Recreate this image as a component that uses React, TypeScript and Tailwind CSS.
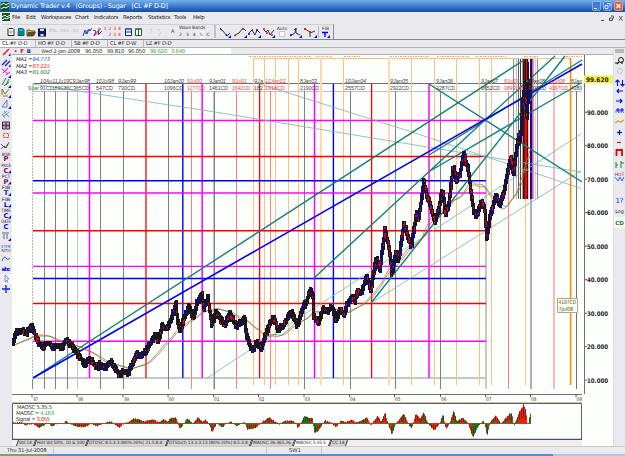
import type { ReactNode } from 'react';
import clsx from 'clsx';

type Pt = [number, number];

const menus = [
  { name: 'File', w: 'w-[14px]' },
  { name: 'Edit', w: 'w-[15px]' },
  { name: 'Workspaces', w: 'w-[34px]' },
  { name: 'Chart', w: 'w-[19px]' },
  { name: 'Indicators', w: 'w-[29px]' },
  { name: 'Reports', w: 'w-[25px]' },
  { name: 'Statistics', w: 'w-[26px]' },
  { name: 'Tools', w: 'w-[19px]' },
  { name: 'Help', w: 'w-[14px]' },
];

const tabs = [
  { name: 'CL #F D-D', w: 'w-[35px]' },
  { name: 'HO #F D-D', w: 'w-[36px]' },
  { name: 'SB #F D-D', w: 'w-[36px]' },
  { name: 'CL #F D-W', w: 'w-[36px]' },
  { name: 'LZ #F D-D', w: 'w-[36px]' },
];

const price: Pt[] = [
  [12, 345], [17, 332], [21.7, 329], [26, 334], [32.5, 326], [36, 337], [40, 344], [44, 347], [48.5, 342], [52.5, 348],
  [58, 346], [63, 347], [66, 340], [71, 345], [77, 353], [81.5, 359], [86, 366], [88.5, 359], [93, 362], [97.5, 369],
  [100, 364], [105, 368], [110.5, 361], [115, 368], [119.5, 375], [124, 371], [128, 374], [133, 362], [137, 353], [141.5, 356],
  [146.5, 350], [151.5, 342], [155, 334], [158.5, 340], [162.5, 326], [167.5, 328], [172.5, 315], [176, 304], [177.5, 319], [180.5, 331],
  [184.5, 317], [189, 307], [193.5, 318], [197, 303], [202, 295], [204, 308], [208, 298], [212, 324], [216.5, 311], [221, 320],
  [225, 324], [230, 314], [236.5, 326], [243, 320], [245, 319], [246.5, 336], [252.5, 350], [257, 343], [261.5, 348], [266.5, 333],
  [270, 323], [274, 318], [278, 330], [285, 323], [291.5, 312], [297.5, 326], [303, 308], [307, 301], [310.5, 288], [313, 297],
  [313.8, 315], [318.5, 325], [323, 309], [328, 311], [332.5, 307], [336, 320], [340, 310], [345, 314], [347, 305], [351.5, 298],
  [355, 301], [358.5, 289], [361.5, 294], [366.5, 276], [371, 290], [376.5, 258], [380, 269], [383, 246], [385, 230], [389, 247],
  [392, 273], [396.5, 252], [399, 259], [404, 223], [410, 243], [411.5, 248], [412.5, 240], [416.5, 214], [419, 218], [424, 182],
  [426.5, 193], [430.5, 206], [435, 222], [439, 210], [442.5, 188], [445.5, 215], [449, 203], [453.5, 165], [456, 180], [460, 174],
  [464, 155], [468.5, 170], [471, 190], [473.5, 210], [476.5, 217], [481.5, 202], [485, 210], [487, 239], [490, 217], [493, 207],
  [496.5, 194], [500, 206], [504, 193], [507.5, 173], [511.5, 156], [513.5, 176], [516.5, 150], [519, 137], [520.5, 142], [522.5, 107],
  [525, 84], [527, 117], [529, 88], [530, 82], [531, 88],
];

const osc: Pt[] = [
  [12, 1], [20, 1], [22, 1], [25, -2], [33, 0], [39, -4.5], [44, -2], [47, 1], [52, -3], [57, 0], [64, 0], [66, 3], [69, 0], [78, -3.5],
  [86, -3], [91, 0], [97, -3], [103, 0], [110, 2], [114, 0], [119, -4], [124, 0], [130, 2], [134, 5], [139, 4], [144, 2], [148, 3],
  [154, 4], [158, 1], [163, 4], [168, 2], [170, 5], [176, 6], [178, 0], [180, -6], [184, 0], [187, 5], [190, 3], [193, 0], [198, 6],
  [203, 2], [205, 4], [209, 0], [212, -9], [217, 0], [223, -4], [226, 0], [231, 2], [237, -3], [241, 0], [245, 1], [247, -6],
  [255, -5], [260, 0], [269, 6], [275, 2], [280, -1], [283, 2], [293, 3], [296, 0], [298, -5], [302, 2], [304, 7], [313, 5],
  [314, -9], [318, -8], [323, 0], [325, 3], [331, 1], [336, -4], [341, 3], [345, 1], [352, 4], [356, 1], [362, 3], [367, 6],
  [371, -2], [378, 8], [381, 1], [385, 11], [388, 0], [392, -11], [396, 0], [404, 10], [408, 0], [412, -5], [416, 10], [420, 5],
  [424, 11], [428, 0], [434, -7], [440, 0], [443, 10], [446, -6], [450, 1], [454, 13], [457, 2], [463, 6], [468, 0], [473, -14],
  [478, -3], [483, 3], [485, 0], [487, -13], [490, 1], [496, 8], [501, 0], [509, 9], [512, 10], [514, -3], [519, 11], [524, 19],
  [526, 12], [528, -4], [530, 9], [531, 10],
];

const at = (pts: Pt[], x: number) => {
  const i = pts.findIndex((p) => p[0] >= x);
  if (i <= 0) return i === 0 ? pts[0][1] : pts[pts.length - 1][1];
  const [x0, y0] = pts[i - 1];
  const [x1, y1] = pts[i];
  return y0 + ((y1 - y0) * (x - x0)) / (x1 - x0);
};

const noise = (n: number) => {
  const v = Math.sin(n * 127.1) * 43758.5453;
  return v - Math.floor(v);
};

const average = (span: number) => {
  let d = '';
  for (let x = 12; x < 531; x += 2) {
    let sum = 0;
    for (let k = 0; k < span; k++) sum += at(price, x - k);
    d += `${d ? 'L' : 'M'}${x} ${(sum / span).toFixed(1)}`;
  }
  return d;
};

const bars = (() => {
  let black = '';
  let blue = '';
  let red = '';
  for (let i = 0; i < 519; i++) {
    const x = 12.5 + i;
    const y0 = at(price, x - 0.5);
    const y1 = at(price, x + 0.5);
    const top = Math.round(Math.min(y0, y1) - 1 - noise(i) * 3.5);
    const bottom = Math.round(Math.max(y0, y1) + 1 + noise(i + 900) * 3.5);
    black += `M${x} ${top}V${bottom}`;
    const dens = x < 340 ? 0.25 : 0.6;
    for (let y = top + 1; y < bottom - 1; y += 2) {
      const r = noise(i * 3.7 + y * 1.3);
      if (r > dens) continue;
      const seg = `M${x} ${y}v${r < dens * 0.6 ? 2 : 1}`;
      const falling = y1 > y0;
      if (falling === r > dens * 0.2) red += seg;
      else blue += seg;
    }
  }
  return { black, blue, red };
})();

const oscBars = (() => {
  let red = '';
  let green = '';
  let dark = '';
  for (let i = 0; i < 519; i++) {
    const x = 12.5 + i;
    const v = at(osc, x) + (noise(i + 50) - 0.5);
    const seg = `M${x} 423.5V${(423.5 - v).toFixed(1)}`;
    if (noise(Math.floor(i / 2) + 7) > 0.45) red += seg;
    else green += seg;
    if (i % 2) dark += `M${x} ${(423.5 - v * 0.3).toFixed(1)}V${(423.5 - v * 1.05).toFixed(1)}`;
  }
  return { red, green, dark };
})();

const verticals = [
  { c: '#808080', w: 1, y: 91, b: 389, xs: [44.5, 55.5, 67.5, 100.5, 123.5, 168.5, 214.5, 304.5, 350.5, 395.5, 440.5] },
  { c: '#c4c4c8', w: 1, y: 91, b: 389, xs: [77.5, 213.5] },
  { c: '#ff8080', w: 1, y: 91, b: 389, xs: [191.5, 236.5, 270.5, 508.5] },
  { c: '#ffbf80', w: 1, y: 58, b: 385, xs: [253.5, 264.5, 275.5, 288.5, 298.5, 343.5, 411.5, 434.5, 456.5, 479.5, 491.5, 525.5] },
  { c: '#ffd9b0', w: 2, y: 58, b: 385, xs: [321, 389] },
  { c: '#c8c8c8', w: 2, y: 84, b: 389, xs: [486] },
  { c: '#b4acb4', w: 2, y: 58, b: 389, xs: [531] },
  { c: '#ffb8b8', w: 2, y: 84, b: 389, xs: [554] },
  { c: '#ff8c00', w: 1.6, y: 58, b: 385, xs: [570.6] },
  { c: '#707070', w: 1, y: 91, b: 389, xs: [576.5] },
  { c: '#ff00ff', w: 1.5, y: 84, b: 378, xs: [89.5, 202.2, 314.5, 429] },
  { c: '#ff0000', w: 1.3, y: 84, b: 378, xs: [146, 259.6, 371.6] },
  { c: '#0000ff', w: 1.4, y: 84, b: 378, xs: [182.8, 333.4] },
];

const levels = [
  { c: '#ff00ff', ys: [120.5, 193, 266.4, 341.2] },
  { c: '#ff0000', ys: [156.5, 230.7, 303.5] },
  { c: '#0000ff', ys: [180.7, 278.5] },
];

const cluster: [number, string][] = [
  [513.5, '#909090'], [516.5, '#c0c0c0'], [518.5, '#606060'], [520.5, '#404040'], [522.5, '#a0a0a0'], [523.5, '#202020'],
  [524.5, '#a00000'], [525.5, '#ff0000'], [526.5, '#ff0000'], [527.5, '#101010'], [528.5, '#ffbf80'], [530.5, '#400040'],
  [531.5, '#0000ff'], [532.5, '#b070c0'], [533.5, '#ff9090'], [535.5, '#ffc8c8'], [537.5, '#909090'],
];

const stamps: [number, string, number, string, number, string?][] = [
  [40, '10Au11Ju19C9Jan98', 50, '91C1189C86C365CD', 49],
  [96, '10Jul98', 18, '547CD', 17],
  [118, '9Jan99', 18, '730CD', 17],
  [164, '10Jan00', 20, '1096CD', 19],
  [187, '9Jul00', 15, '1277CD', 18, '#ff4040'],
  [209, '9Jan01', 17, '1461CD', 19],
  [232, '9Jul01', 15, '1642CD', 18, '#ff4040'],
  [254, '9Ja', 9, '182', 9],
  [265, '12Apr02', 21, '1918CD', 20, '#ff4040'],
  [300, '8Jan03', 17, '2190CD', 19],
  [345, '10Jan04', 21, '2557CD', 20],
  [390, '9Jan05', 18, '2922CD', 19],
  [436, '9Jan06', 17, '3287CD', 19],
  [481, '9Jan07', 17, '3652CD', 19],
  [504, '8Jul07', 15, '3833CD', 19, '#ff4040'],
  [528, '9Jan08', 17, '4018CD', 18],
  [549, '8Jul08', 16, '4197CD', 19, '#ff4040'],
  [571, '8Jan', 11, '4380', 11],
];

const years: [number, string][] = [
  [32, "'97"], [77, "'98"], [123, "'99"], [168, '00'], [213.5, '01'], [258.5, '02'], [304, '03'],
  [349.5, '04'], [394.5, '05'], [440.5, '06'], [485.5, '07'], [530.5, '08'], [576, '09'],
];

const studies = [
  { name: 'Vol 14', w: 'w-[18px]' },
  { name: 'Hist Vol 50%, 10 & 100', w: 'w-[52px]' },
  { name: 'DTOSC 8.5.3.3 (80%-20%) 21.5.8.8', w: 'w-[80px]' },
  { name: 'DTStoch 13.3.3.13 (80%-20%) 8.5.3.8', w: 'w-[84px]' },
  { name: 'MAOSC 26.365.26', w: 'w-[43px]' },
  { name: 'MAOSC 5.35.5', w: 'w-[36px]', active: true },
  { name: 'CC 14', w: 'w-[17px]' },
];

function Icon({ children, w = 12, h = 12 }: { children: ReactNode; w?: number; h?: number }) {
  return (
    <svg width={w} height={h} viewBox={`0 0 ${w} ${h}`} fill="none" className="shrink-0">
      {children}
    </svg>
  );
}

function Corner() {
  return <path d="M12 9v3h-3z" fill="#0000ff" />;
}

function TitleBar() {
  return (
    <div className="flex h-[12px] items-center bg-linear-to-b from-[#78b0e8] via-[#3d7fd0] to-[#1c48a0] pl-[1px] text-white">
      <Icon w={8} h={9}>
        <rect width="8" height="9" fill="#0a5a20" />
        <path d="M0 3l3-2 2 2 3-2M0 7l3-2 2 1 3-2" stroke="#fff" />
      </Icon>
      <span className="ml-[2px] whitespace-pre text-[6.4px] leading-[12px] tracking-[-0.16px]">Dynamic Trader v.4   (Groups) - Sugar   [CL #F D-D]</span>
      <div className="ml-auto mr-[2px] flex gap-[2px]">
        <Icon w={9} h={10}>
          <rect x=".5" y=".5" width="8" height="9" rx="1" fill="#3c7bd8" stroke="#b8d4f4" strokeWidth=".6" />
          <path d="M2 7.5h3" stroke="#fff" />
        </Icon>
        <Icon w={9} h={10}>
          <rect x=".5" y=".5" width="8" height="9" rx="1" fill="#3c7bd8" stroke="#b8d4f4" strokeWidth=".6" />
          <path d="M2 4.500h3v3h-3zM4 2.500h3v3" stroke="#fff" strokeWidth=".8" />
        </Icon>
        <Icon w={9} h={10}>
          <rect x=".5" y=".5" width="8" height="9" rx="1" fill="#e06038" stroke="#f4c8b8" strokeWidth=".6" />
          <path d="M2.500 3l4 4m0-4l-4 4" stroke="#fff" strokeWidth="1.200" />
        </Icon>
      </div>
    </div>
  );
}

function MenuBar() {
  return (
    <div className="flex h-[11px] items-center text-[5.4px] leading-none text-[#222]">
      <Icon w={12} h={9}>
        <rect x="2" width="8" height="8" fill="#0a5a20" />
        <path d="M2 4l3-2 2 2 3-2M2 7l3-2 2 1 3-2" stroke="#fff" />
      </Icon>
      {menus.map((m) => (
        <span key={m.name} className={clsx('shrink-0 whitespace-nowrap tracking-[-0.22px]', m.w)}>
          {m.name}
        </span>
      ))}
      <div className="ml-auto mr-[2px]">
        <Icon w={24} h={8}>
          <path d="M2 6.500h3M10.500 4h3v2.500h-3zM12 2h2.500v2.500M20 2l3.500 4.500m0-4.500l-3.500 4.500" stroke="#555" />
        </Icon>
      </div>
    </div>
  );
}

function Toolbar() {
  return (
    <div className="flex h-[17px] items-center border-b border-[#7d8894] pl-[2px]">
      <div className="flex h-[15px] w-[332px] items-center border-r border-t border-[#d0d0d4] border-r-[#8c8c94] pl-[3px]">
        <Icon w={10}>
          <path d="M4 2.500h4l1 1v6h-6v-7" stroke="#222" fill="#fff" />
          <path d="M4 6h4m-2-2v4" stroke="#777" strokeWidth=".6" />
        </Icon>
        <Icon w={10}>
          <path d="M3.500 2.500h4l1.500 1v6h-6z" stroke="#065a68" fill="#10b8d0" />
          <path d="M4 6h4m-4 2h4" stroke="#044" />
        </Icon>
        <Icon w={11}>
          <path d="M2 4h3l1 1h4l-2 5h-6z" fill="#d8d020" stroke="#333" strokeWidth=".8" />
          <path d="M3 6h8l-2 4h-7z" fill="#555020" />
        </Icon>
        <Icon w={12}>
          <rect x="2.500" y="3" width="7" height="7" fill="#101890" stroke="#111" />
          <path d="M4 3h4v2h-4zM4.500 8h3v2h-3z" fill="#ddd" />
        </Icon>
        <div className="flex w-[34px] gap-[3px] pl-[1px] text-[4.5px] text-[#b8b8c0]">
          <span>PNL</span>
          <span>DEL</span>
          <span>|0|</span>
        </div>
        <Icon w={10}>
          <path d="M1 10l2-6 2 4 2-5 1 2 2-3M3 8l3-4" stroke="#2040d0" />
        </Icon>
        <div className="flex h-[14px] w-[10px] items-center bg-white/70">
          <Icon w={10}>
            <path d="M1 4l3 1-2 5 5-6-1 5 4-4M6 3h3" stroke="#801080" />
          </Icon>
        </div>
        <div className="flex w-[20px] flex-col items-end pr-px text-[4.5px] leading-[6px] text-[#d02020]">
          <span className="whitespace-pre tracking-[0.2px]">1 2 3 4</span>
          <span className="whitespace-pre tracking-[0.2px]">2 3 4</span>
        </div>
        <Icon w={11}>
          <path d="M3.500 3h6v6.500h-6zM3 6h7" stroke="#102080" fill="#fff" />
          <path d="M3 3h7" stroke="#2060d0" strokeWidth="1.500" />
        </Icon>
        <Icon w={11}>
          <path d="M2.500 3h6v6.500h-6zM5.500 3v6" stroke="#186018" fill="#fff" />
          <path d="M2 3h7" stroke="#308040" strokeWidth="1.500" />
        </Icon>
        <Icon w={27}>
          <path d="M6 3c3 0 2 3 0 4m8-4l3 3-2 4" stroke="#bcbcc8" strokeDasharray="1 1" />
        </Icon>
        <span className="w-[8px] text-[5px]">A</span>
        <div className="flex w-[35px] flex-col text-[4.5px] leading-[6px]">
          <span className="whitespace-nowrap tracking-[-0.15px]">Wave Bands</span>
          <span className="flex h-[7px] gap-[4px] leading-[7px]">
            <span>2</span>
            <span>3</span>
            <span>4</span>
            <span className="bg-white">5</span>
            <span>C</span>
          </span>
        </div>
        <span className="mr-[3px] h-[13px] w-[2px] border-x border-[#c0c0c8]" />
        <Icon w={14}>
          <path d="M1 3l3 2 4 5 3-3" stroke="#334" />
          <path d="M1 2l2 2M8 8l-1 2" stroke="#0000ff" />
          <Corner />
        </Icon>
        <Icon w={14}>
          <path d="M2 9l4-2 4-5 3 3" stroke="#334" />
          <path d="M1 9.500h2M9 3h2" stroke="#e02020" strokeWidth="1.600" />
          <path d="M14 9v3h-3z" fill="#0000ff" />
        </Icon>
        <Icon w={15}>
          <path d="M1 8l4-4 3 5 2-5 3 3" stroke="#334" />
          <path d="M1 8h2M5 4h1M9 4h2" stroke="#0000ff" strokeWidth="1.600" />
          <path d="M14 9v3h-3z" fill="#0000ff" />
        </Icon>
        <Icon w={14}>
          <path d="M1 3l3 3 2-2 2 5 4-5" stroke="#334" />
          <path d="M1 3h2M4 7h2M9 9h2" stroke="#e02020" strokeWidth="1.600" />
          <path d="M13 9v3h-3z" fill="#0000ff" />
        </Icon>
        <div className="flex w-[12px] flex-col items-center text-[4.500px] leading-[5px]">
          Auto
          <span className="h-[6px] w-[6px] border border-[#c8c8c8] bg-white" />
        </div>
        <Icon w={15}>
          <path d="M2 10l5-3 1-5v5l4 2" stroke="#334" />
          <path d="M2 9h2M7 3v1" stroke="#0000ff" strokeWidth="1.600" />
          <path d="M14 9v3h-3z" fill="#0000ff" />
        </Icon>
        <Icon w={15}>
          <path d="M2 3l5 3v5m0-4l5-2" stroke="#334" />
          <path d="M1 3h2M6 6h2" stroke="#e02020" strokeWidth="1.800" />
          <path d="M14 9v3h-3z" fill="#0000ff" />
        </Icon>
        <div className="flex flex-col items-center border-l border-[#b8b8c0] pl-[2px] text-[4.500px] leading-[5px]">
          FIB
          <Icon w={9} h={7}>
            <path d="M1 1.500h6M4 1v5" stroke="#0000ff" strokeWidth="1.400" />
            <path d="M9 4v3h-3z" fill="#0000ff" />
          </Icon>
        </div>
      </div>
    </div>
  );
}

function LeftTools() {
  return (
    <div className="h-[398px] w-[12px] shrink-0">
      <svg width="12" height="398" viewBox="0 48 12 398" fill="none" fontFamily="DejaVu Sans" textAnchor="middle">
        <path d="M3 55l6-6" stroke="#ff1010" strokeWidth="1.400" />
        <path d="M2 65l5-5m-2 6l5-5" stroke="#1010ff" strokeWidth="1.200" />
        <path d="M2 69l6 5m-5-1l5-5m-2 7l4-3" stroke="#ff00d8" />
        <path d="M2 85l4-7m-2 8l5-4m-3 3l3-6" stroke="#208040" />
        <path d="M2 95V89l3 5 4-5m-6 7h5" stroke="#888020" />
        <path d="M2 107l5-7v7z" stroke="#6080d8" />
        <path d="M2 115l5-4m-4 6l6-5m-5-1l5 6m-7-3l3 4" stroke="#60a8b0" />
        <path d="M10.500 53v3h-2zM10.500 64v3h-2zM11 75v3h-3zM11 85v3h-3zM11 95v3h-3zM11 106v3h-3z" fill="#0000ff" />
        <path d="M2.500 122h7v7h-7z" fill="#c0b8d8" stroke="#303040" />
        <path d="M3 125.500h6m-3-3v6" stroke="#802060" strokeWidth="1.400" />
        <path d="M3.500 133.500h5v4h-5z" stroke="#ff3030" strokeDasharray="2 1" />
        <path d="M1 149l3-3 2 2 3-6M1 144l4 4 3-4" stroke="#334" strokeWidth=".8" />
        {['BOW', 'PRICE', 'PCT', 'FIB', 'FIB', 'TIME', 'DATE'].map((t, i) => (
          <g key={i}>
            <text x="6" y={155.500 + i * 11.300} fontSize="4.500" fill="#222" textLength={t.length > 3 ? 9.5 : 8.5} lengthAdjust="spacingAndGlyphs">{t}</text>
            <text x="6" y={161.300 + i * 11.300} fontSize="6.700" fontWeight="bold" fill={i < 3 ? '#800060' : '#0010e0'}>
              {['P', 'C', 'P', 'T', 'L', 'C', 'C'][i]}
            </text>
            {i > 0 && i < 6 && <path d={`M11 ${159 + i * 11.300}v3h-3z`} fill="#0000ff" />}
          </g>
        ))}
        <path d="M2 233h7m-5 1v5m3-5v5" stroke="#507080" />
        <path d="M11 238v3h-3z" fill="#0000ff" />
        <text x="6" y="247.500" fontSize="4.300" fill="#3040a0" textLength="9.5" lengthAdjust="spacingAndGlyphs">ETFR</text>
        <text x="6" y="251.500" fontSize="4" fill="#3040a0" textLength="9.5" lengthAdjust="spacingAndGlyphs">RATIO</text>
        <path d="M2 261q2-6 4-3t4 0" stroke="#4060e0" />
        <path d="M1 256h1m7 6h1" stroke="#f0e020" strokeWidth="2" />
        <text x="6" y="271" fontSize="5.500" fontWeight="bold" fill="#0010e0" textLength="9">abc</text>
        <path d="M1 274h11v10H1z" fill="#f6f6f8" />
        <path d="M5 275v7l2-2 1 3m-3-8l4 4h-2" stroke="#6070c0" strokeWidth=".8" />
        <path d="M6 285v8m-4-4h8" stroke="#0020f0" strokeWidth="1.300" />
      </svg>
    </div>
  );
}

function RightTools() {
  return (
    <svg width="12" height="398" viewBox="613 48 12 398" fill="none" className="shrink-0" fontFamily="DejaVu Sans" textAnchor="middle">
      <path d="M613.500 48v398" stroke="#d4d4dc" strokeDasharray="1 1" />
      <path d="M615 49h9v4h-9z" fill="#b8b8b8" />
      <circle cx="621" cy="60" r="2.500" stroke="#222" />
      <path d="M615 63h3m1-1l-2 2m5-3v3" stroke="#222" strokeWidth="1.200" />
      <circle cx="620" cy="71" r="2.500" stroke="#c8c8d0" />
      <path d="M617.500 86v-6m-2 2l2-2 2 2M622.500 80v6m-2-2l2 2 2-2M623 91h-6m2-2l-2 2 2 2M616 101h6m-2-2l2 2-2 2M616 110h8m-6-2v4m4-4v4" stroke="#0010f0" strokeWidth="1.100" />
      <path d="M616 113v-3l3 3v-4m2 4v-3l3 3" stroke="#4060f0" strokeWidth=".8" />
      <path d="M615 123l3-2 3 1 3-2" stroke="#b8b020" strokeWidth="1.200" />
      <path d="M617 132.500h5m-2.500-2.500v5" stroke="#0000ff" strokeWidth="1.200" />
      <path d="M617 142.500h4" stroke="#ff0000" strokeWidth="1.200" />
      <path d="M616.500 156v-6h5.500v6" stroke="#f00000" strokeWidth="1.800" />
      <path d="M616 162v6m0-3h2m3-4v7m0-5h3" stroke="#208020" />
      <text x="619.500" y="176" fontSize="4.500" fill="#a02040">HOT</text>
      <path d="M615 177l3 4 2-4 2 4 2-4" stroke="#4060ff" />
      <text x="619.500" y="203" fontSize="7" fill="#2030f0">1?</text>
      <text x="619.500" y="213" fontSize="4.800" fill="#222">Log</text>
      <path d="M614 217h11v11h-11z" fill="#fafafa" />
      <text x="619.500" y="225" fontSize="5.500" fontWeight="bold" fill="#108020">CD</text>
    </svg>
  );
}

function PriceChart() {
  return (
    <svg width="601" height="347" viewBox="12 55 601 347" fill="none" className="block bg-[#fdfffc]" fontFamily="DejaVu Sans">
      <g shapeRendering="crispEdges">
        <path d="M33 83.500H582M12 394.500H582M584.500 55V394" stroke="#707070" />
        <path d="M33 91.500H582" stroke="#c0c0c8" />
        <path d="M33 378H487" stroke="#c8c8cc" strokeWidth="1.600" />
        <path d="M32.500 84V378" stroke="#c0b8a8" strokeDasharray="2 1" />
        <path d="M32.500 379V389" stroke="#60a060" />
        <path d="M253 58.500H571" stroke="#ffbf80" />
      </g>
      {verticals.map((g) =>
        g.xs.map((x) => <path key={x} d={`M${x} ${g.y}V${g.b}`} stroke={g.c} strokeWidth={g.w} />),
      )}
      {levels.map((g) =>
        g.ys.map((y) => <path key={y} d={`M33 ${y}H486`} stroke={g.c} strokeWidth="1.400" />),
      )}
      {cluster.map(([x, c]) => (
        <path key={x} d={`M${x} 59V199`} stroke={c} />
      ))}

      {/* trend lines */}
      <path d="M33 84L215 112 415 145 581 172M260 84L415 133 581 188.500M207 378L581 134M371 303L581 171" stroke="#78b0b8" strokeWidth=".8" />
      <path
        d="M33 378L524 60M314 280V278L486 119 555 56M371 303L447 207 565 56M430 171L581 83M429 155L486 120 582 60M429 84L582 182"
        stroke="#108080"
        strokeWidth="1.400"
      />
      <path d="M33 378L582 64" stroke="#0000f0" strokeWidth="1.600" />
      <path d={average(32)} stroke="#e06040" strokeWidth=".8" />
      <path d={average(36)} stroke="#308040" strokeWidth=".6" />
      <g shapeRendering="crispEdges">
        <path d={bars.black} stroke="#18181c" strokeWidth="2.400" />
        <path d="M525.500 59V110M528.500 62V90M531.500 70V96" stroke="#181820" strokeWidth="1" />
        <path d={bars.blue} stroke="#0000ff" strokeWidth="1.500" />
        <path d={bars.red} stroke="#f00008" strokeWidth="1.500" />
      </g>

      {/* date stamps */}
      <g fontSize="5.800" fontFamily="Liberation Sans" fill="#444">
        {stamps.map(([x, date, w, days, w2, color]) => (
          <g key={x} fill={color}>
            <text x={x} y="82.500" textLength={w} fontStyle="italic" lengthAdjust="spacingAndGlyphs">{date}</text>
            <text x={x} y="89.500" textLength={w2} lengthAdjust="spacingAndGlyphs">{days}</text>
          </g>
        ))}
        <text x="28" y="89.500" fill="#308040" textLength="11">9Jar</text>
      </g>
      <g fontSize="5.300" fontStyle="italic" fill="#222">
        <text x="16" y="61" textLength="34">MA1 =<tspan fill="#2040e0">94.773</tspan></text>
        <text x="16" y="67.500" textLength="34">MA2 =<tspan fill="#ff3030">83.225</tspan></text>
        <text x="16" y="74" textLength="34">MA3 =<tspan fill="#208040">81.602</tspan></text>
      </g>
      <path d="M249 56.500H311M316 56.500H332M344 56.500H360M390 56.500H430M437 56.500H470M475 56.500H506M524 56.500H539M566 56.500H582" stroke="#ffa060" strokeDasharray="2 1 1 1" strokeWidth="1.200" />

      {/* price scale */}
      <path d="M584 75.500h29v8h-29z" fill="#f4f050" />
      <g fontSize="6.300" fontWeight="bold" fill="#222">
        <text x="586" y="82" textLength="22.500" lengthAdjust="spacingAndGlyphs">99.620</text>
        {[90, 80, 70, 60, 50, 40, 30, 20, 10].map((p, i) => (
          <g key={p}>
            <path d={`M585 ${112.200 + i * 33.500}h2`} stroke="#555" />
            <text x="587" y={114.600 + i * 33.500} textLength="21" lengthAdjust="spacingAndGlyphs">{p}.000</text>
          </g>
        ))}
      </g>
      <g fontSize="5" fill="#333">
        {years.map(([x, y]) => (
          <g key={y}>
            <path d={`M${x} 394v3`} stroke="#555" />
            <text x={x + 0.500} y="400.500" textLength="5.500" lengthAdjust="spacingAndGlyphs">{y}</text>
          </g>
        ))}
      </g>
      <path d="M557.500 298.500h20v14h-20z" fill="#fffff0" stroke="#a8a890" />
      <g fontSize="5.300" fill="#504820">
        <text x="558.500" y="304.300" textLength="17.500" lengthAdjust="spacingAndGlyphs">4197CD</text>
        <text x="558.500" y="310.700" textLength="14.500" lengthAdjust="spacingAndGlyphs">7Jul08</text>
      </g>
    </svg>
  );
}

function Oscillator() {
  return (
    <svg width="601" height="38" viewBox="12 402 601 38" fill="none" className="block bg-[#fdfffc]" fontFamily="DejaVu Sans">
      <path d="M12 402.500H582" stroke="#d0c0a8" />
      <path d="M12.500 439V403.500H581.500V439" stroke="#606060" />
      <path d="M12 439.500H582" stroke="#505058" strokeWidth="1.400" />
      <path d="M13 423.500H531" stroke="#a02020" strokeWidth=".8" />
      <path d={oscBars.red} stroke="#f02010" strokeWidth="1" />
      <path d={oscBars.green} stroke="#108018" strokeWidth="1" />
      <path d={oscBars.dark} stroke="#702010" strokeWidth=".8" />
      <g fontSize="5.300" fill="#333">
        <text x="17" y="408.700" textLength="35">MAOSC 5.35.5</text>
        <text x="16" y="415" textLength="38">MAOSC = <tspan fill="#20a040">4.163</tspan></text>
        <text x="16" y="421.200" textLength="34">Signal = <tspan fill="#c02030">3.055</tspan></text>
      </g>
    </svg>
  );
}

export default function App() {
  return (
    <div className="flex h-[456px] w-[625px] flex-col overflow-hidden bg-[#e9e9ee] font-['DejaVu_Sans',sans-serif] text-[#333]">
      <TitleBar />
      <MenuBar />
      <Toolbar />

      {/* chart tabs */}
      <div className="flex h-[8px] items-center border-b border-[#b0b0b4] text-[5.3px] leading-[7px] tracking-[-0.25px]">
        {tabs.map((t, i) => (
          <span
            key={t.name}
            className={clsx('shrink-0 whitespace-nowrap pl-[2px]', t.w, i === 0 && 'bg-linear-to-r from-[#f8f8fa] from-85% to-[#e9e9ee] to-85%', i > 0 && 'border-l border-[#b8b8bc]')}
          >
            {t.name}
          </span>
        ))}
      </div>

      <div className="flex h-[398px]">
        <LeftTools />
        <div className="w-[601px]">
          <div className="flex h-[7px] items-center border-b border-[#b0b0b4] text-[5.3px] leading-[6px] tracking-[-0.1px]">
            <div className="flex w-[28px] gap-[3px] pl-[2px] font-bold">
              <span className="text-[#ff0000]">•</span>
              <span className="text-[#b01010]">F</span>
              <span className="text-[#1020c0]">B</span>
            </div>
            <div className="flex h-full w-[191px] bg-[#fdfffc] pl-[1px]">
              <span className="w-[44px] whitespace-nowrap tracking-[-0.25px]">Wed 2-Jan-2008</span>
              <span className="w-[22px] tracking-[-0.25px]">96.050</span>
              <span className="w-[21px] tracking-[-0.25px]">99.810</span>
              <span className="w-[22px] tracking-[-0.25px]">96.050</span>
              <span className="w-[21px] tracking-[-0.25px] text-[#40a040]">99.620</span>
              <span className="tracking-[-0.25px] text-[#40a040]">3.640</span>
            </div>
          </div>
          <PriceChart />
          <Oscillator />
          <div className="flex h-[6px] bg-[#fdfffc]">
            <div className="flex w-[570px] bg-[#f0f0f0] pl-[5px] text-[4.5px] leading-[6px] tracking-[-0.2px]">
              {studies.map((s) => (
                <span
                  key={s.name}
                  className={clsx(
                    'shrink-0 -skew-x-[20deg] overflow-hidden whitespace-nowrap border-x border-[#444] px-[1px]',
                    s.w,
                    s.active ? 'bg-white' : 'bg-[#d4d4d8]',
                  )}
                >
                  <span className="inline-block skew-x-[20deg]">{s.name}</span>
                </span>
              ))}
            </div>
          </div>
        </div>
        <RightTools />
      </div>

      {/* status bar */}
      <div className="flex h-[8px] items-center border-t border-[#d4ccc0] text-[5.3px] leading-[7px]">
        <span className="w-[54px] whitespace-nowrap border-r border-[#c8c8cc] pl-[7px] tracking-[-0.2px]">Thu 31-Jul-2008</span>
        <span className="w-[213px] border-r border-[#c8c8cc]">&nbsp;</span>
        <span className="w-[55px] border-r border-[#c8c8cc] pl-[22px]">SW1</span>
      </div>
      <div className="flex h-[2px]">
        <span className="w-[47px] bg-[#70a868]" />
        <span className="w-[506px] bg-[#5090e0]" />
        <span className="flex-1 bg-[#a8c8f0]" />
      </div>
    </div>
  );
}
